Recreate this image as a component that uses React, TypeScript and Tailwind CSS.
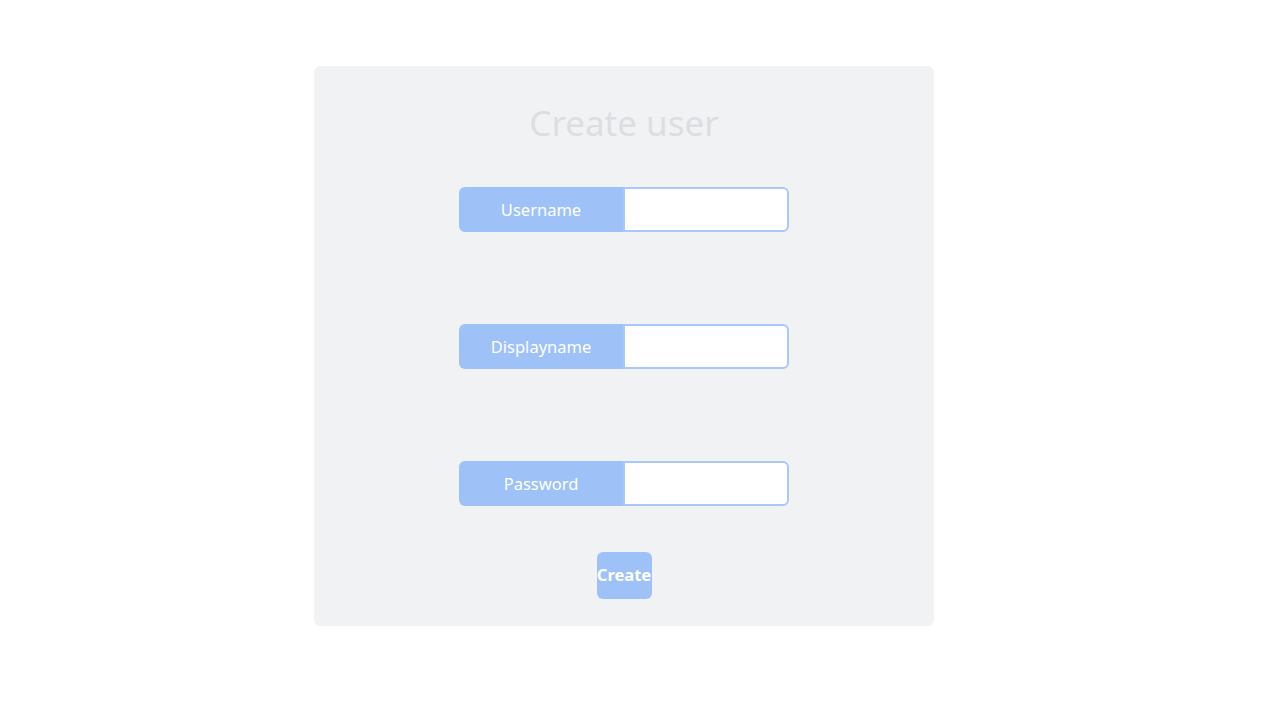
const fields = ["Username", "Displayname", "Password"];

export default function App() {
  return (
    <div className="min-h-screen bg-white pt-[66px] pr-[18px] font-['Noto_Sans',sans-serif]">
      <div className="mx-auto flex w-[620px] h-[560px] flex-col items-center rounded-md bg-[#f1f2f4] pt-[32px]">
        <h1 className="text-[35px] leading-[50px] text-[#dcdee2]">Create user</h1>
        <div className="mt-[39px] flex flex-col gap-[92px]">
          {fields.map((f) => (
            <div key={f} className="flex h-[45px] w-[330px]">
              <label className="flex w-[164px] items-center justify-center rounded-l-md bg-[#9ec2f7] pt-[2px] text-[16.5px] text-white">
                {f}
              </label>
              <input
                type={f === "Password" ? "password" : "text"}
                className="w-[166px] rounded-r-md border-2 border-[#a9c8f8] bg-white outline-none"
              />
            </div>
          ))}
        </div>
        <button className="mt-[46px] h-[47px] w-[55px] rounded-md bg-[#9ec2f7] text-[16.5px] font-bold text-white">
          Create
        </button>
      </div>
    </div>
  );
}
